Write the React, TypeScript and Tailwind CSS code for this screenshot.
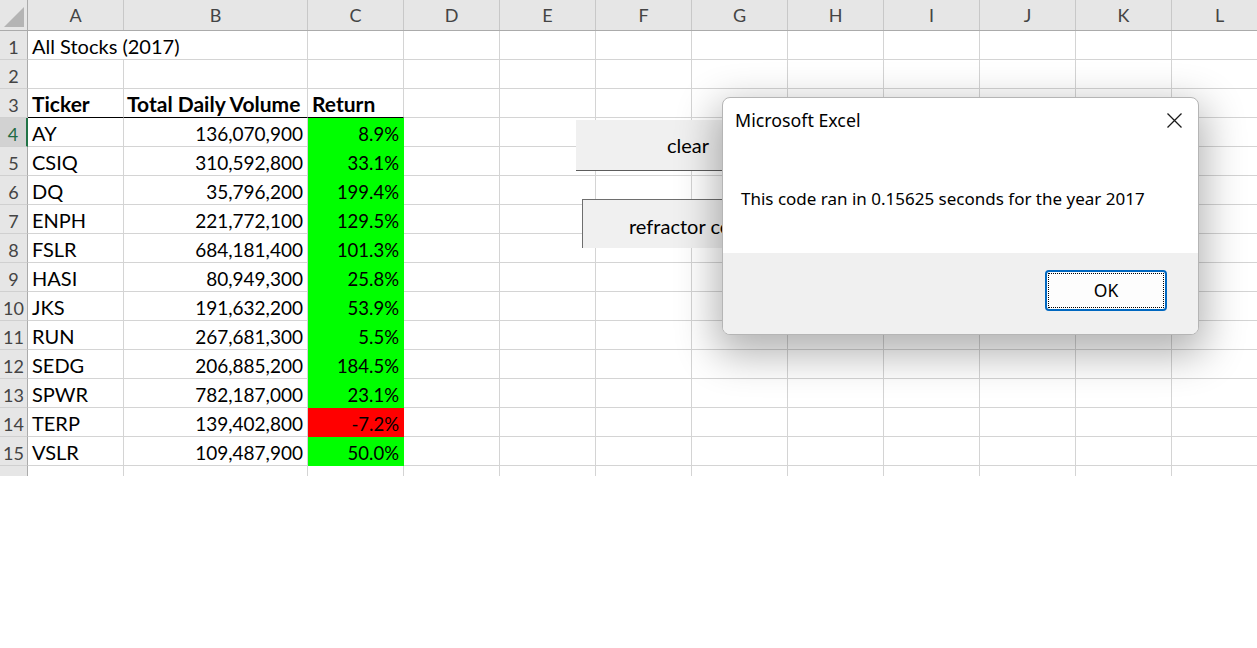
import React from "react";

const colLetters = ["A", "B", "C", "D", "E", "F", "G", "H", "I", "J", "K", "L"];
const colWidths = [
  "w-[96px]",
  "w-[184px]",
  "w-[96px]",
  "w-[96px]",
  "w-[96px]",
  "w-[96px]",
  "w-[96px]",
  "w-[96px]",
  "w-[96px]",
  "w-[96px]",
  "w-[96px]",
  "w-[96px]",
];

type Row = { a: string; b: string; c: string; ret?: "up" | "down"; bold?: boolean };

const rows: Row[] = [
  { a: "All Stocks (2017)", b: "", c: "" },
  { a: "", b: "", c: "" },
  { a: "Ticker", b: "Total Daily Volume", c: "Return", bold: true },
  { a: "AY", b: "136,070,900", c: "8.9%", ret: "up" },
  { a: "CSIQ", b: "310,592,800", c: "33.1%", ret: "up" },
  { a: "DQ", b: "35,796,200", c: "199.4%", ret: "up" },
  { a: "ENPH", b: "221,772,100", c: "129.5%", ret: "up" },
  { a: "FSLR", b: "684,181,400", c: "101.3%", ret: "up" },
  { a: "HASI", b: "80,949,300", c: "25.8%", ret: "up" },
  { a: "JKS", b: "191,632,200", c: "53.9%", ret: "up" },
  { a: "RUN", b: "267,681,300", c: "5.5%", ret: "up" },
  { a: "SEDG", b: "206,885,200", c: "184.5%", ret: "up" },
  { a: "SPWR", b: "782,187,000", c: "23.1%", ret: "up" },
  { a: "TERP", b: "139,402,800", c: "-7.2%", ret: "down" },
  { a: "VSLR", b: "109,487,900", c: "50.0%", ret: "up" },
  { a: "", b: "", c: "" },
];

function HeaderRow() {
  return (
    <div className="flex h-[31px] shrink-0 bg-[#e6e6e6] border-b border-[#ababab]">
      {/* corner */}
      <div className="relative w-[28px] shrink-0 border-r border-[#ababab]">
        <svg className="absolute bottom-[3px] right-[3px]" width="20" height="20" viewBox="0 0 20 20">
          <polygon points="20,0 20,20 0,20" fill="#b4b4b4" />
        </svg>
      </div>
      {colLetters.map((l, i) => (
        <div
          key={l}
          className={`${colWidths[i]} shrink-0 border-r border-[#c8c8c8] flex items-center justify-center text-[18px] text-[#444]`}
        >
          {l}
        </div>
      ))}
    </div>
  );
}

function DataRow({ row, n }: { row: Row; n: number }) {
  const active = n === 4;
  const fill =
    row.ret === "up"
      ? "bg-[#00ff00] border-[#00ff00]"
      : row.ret === "down"
        ? "bg-[#ff0000] border-[#ff0000]"
        : "border-[#d4d4d4]";
  const underline = row.bold ? "border-b-black" : "";
  return (
    <div
      className={`flex h-[29px] shrink-0 leading-none ${row.bold ? "font-bold text-[21px]" : "text-[20px]"}`}
    >
      <div
        className={`w-[28px] shrink-0 flex items-end justify-center pb-[3px] text-[18px] font-normal border-b border-[#d0d0d0] ${
          active
            ? "bg-[#d2d2d2] text-[#1f6b43] border-r-2 border-r-[#217346]"
            : "bg-[#e6e6e6] text-[#444] border-r border-r-[#ababab]"
        }`}
      >
        {n}
      </div>
      <div
        className={`w-[96px] shrink-0 flex items-end pb-[3px] pl-[4px] whitespace-nowrap border-b border-[#d4d4d4] ${underline} ${
          n === 1 ? "overflow-visible relative z-10" : "border-r overflow-hidden"
        }`}
      >
        {row.a}
      </div>
      <div
        className={`w-[184px] shrink-0 flex items-end pb-[3px] whitespace-nowrap border-r border-b border-[#d4d4d4] ${
          row.bold ? "justify-start pl-[3px] border-b-black" : "justify-end pr-[4px] text-[19px]"
        }`}
      >
        {row.b}
      </div>
      <div
        className={`w-[96px] shrink-0 flex items-end pb-[3px] whitespace-nowrap border-r border-b ${fill} ${
          row.bold ? "justify-start pl-[4px] border-b-black" : "justify-end pr-[4px] text-[18.5px]"
        }`}
      >
        {row.c}
      </div>
      {colWidths.slice(3).map((w, i) => (
        <div key={i} className={`${w} shrink-0 border-r border-b border-[#d4d4d4]`} />
      ))}
    </div>
  );
}

function CloseIcon() {
  return (
    <svg width="17" height="15" viewBox="0 0 17 15" fill="none">
      <path d="M1.5 0.5 L15.5 14.5 M15.5 0.5 L1.5 14.5" stroke="#1a1a1a" strokeWidth="1.3" />
    </svg>
  );
}

export default function App() {
  return (
    <div className="relative w-[1257px] h-[648px] overflow-hidden bg-white">
      {/* Sheet */}
      <div className="flex h-[476px] flex-col overflow-hidden font-['Lato',sans-serif] text-black">
        <HeaderRow />
        {rows.map((r, i) => (
          <DataRow key={i} row={r} n={i + 1} />
        ))}
      </div>

      {/* Form buttons on the sheet */}
      <div className="absolute left-[576px] top-[120px] flex h-[51px] w-[224px] items-center justify-center border-b border-[#5c5c5c] bg-[#f0f0f0] font-['Lato',sans-serif] text-[20px] text-black">
        clear
      </div>
      <div className="absolute left-[582px] top-[199px] flex h-[49px] w-[240px] items-center border-l border-t border-[#6e6e6e] bg-[#f0f0f0] pl-[46px] pt-[3px] font-['Lato',sans-serif] text-[20px] text-black whitespace-nowrap">
        refractor code
      </div>

      {/* Message box */}
      <div className="absolute left-[722px] top-[97px] flex h-[238px] w-[477px] flex-col overflow-hidden rounded-[8px] border border-[#b5b5b5] bg-white font-['Noto_Sans',sans-serif] text-black shadow-[0_14px_40px_6px_rgba(0,0,0,0.3)]">
        <div className="flex h-[44px] shrink-0 items-center justify-between pl-[12px] pr-[15px]">
          <span className="text-[17.8px]">Microsoft Excel</span>
          <CloseIcon />
        </div>
        <div className="mt-[46px] pl-[18px] text-[17px] leading-[22px]">
          This code ran in 0.15625 seconds for the year 2017
        </div>
        <div className="mt-auto flex h-[81px] shrink-0 justify-end bg-[#f0f0f0] pr-[31px] pt-[17px]">
          <div className="relative flex h-[41px] w-[122px] items-center justify-center rounded-[4px] border-2 border-[#0067c0] bg-[#fdfdfd] text-[17.5px]">
            <div className="absolute inset-[1px] border border-dotted border-black" />
            OK
          </div>
        </div>
      </div>
    </div>
  );
}
